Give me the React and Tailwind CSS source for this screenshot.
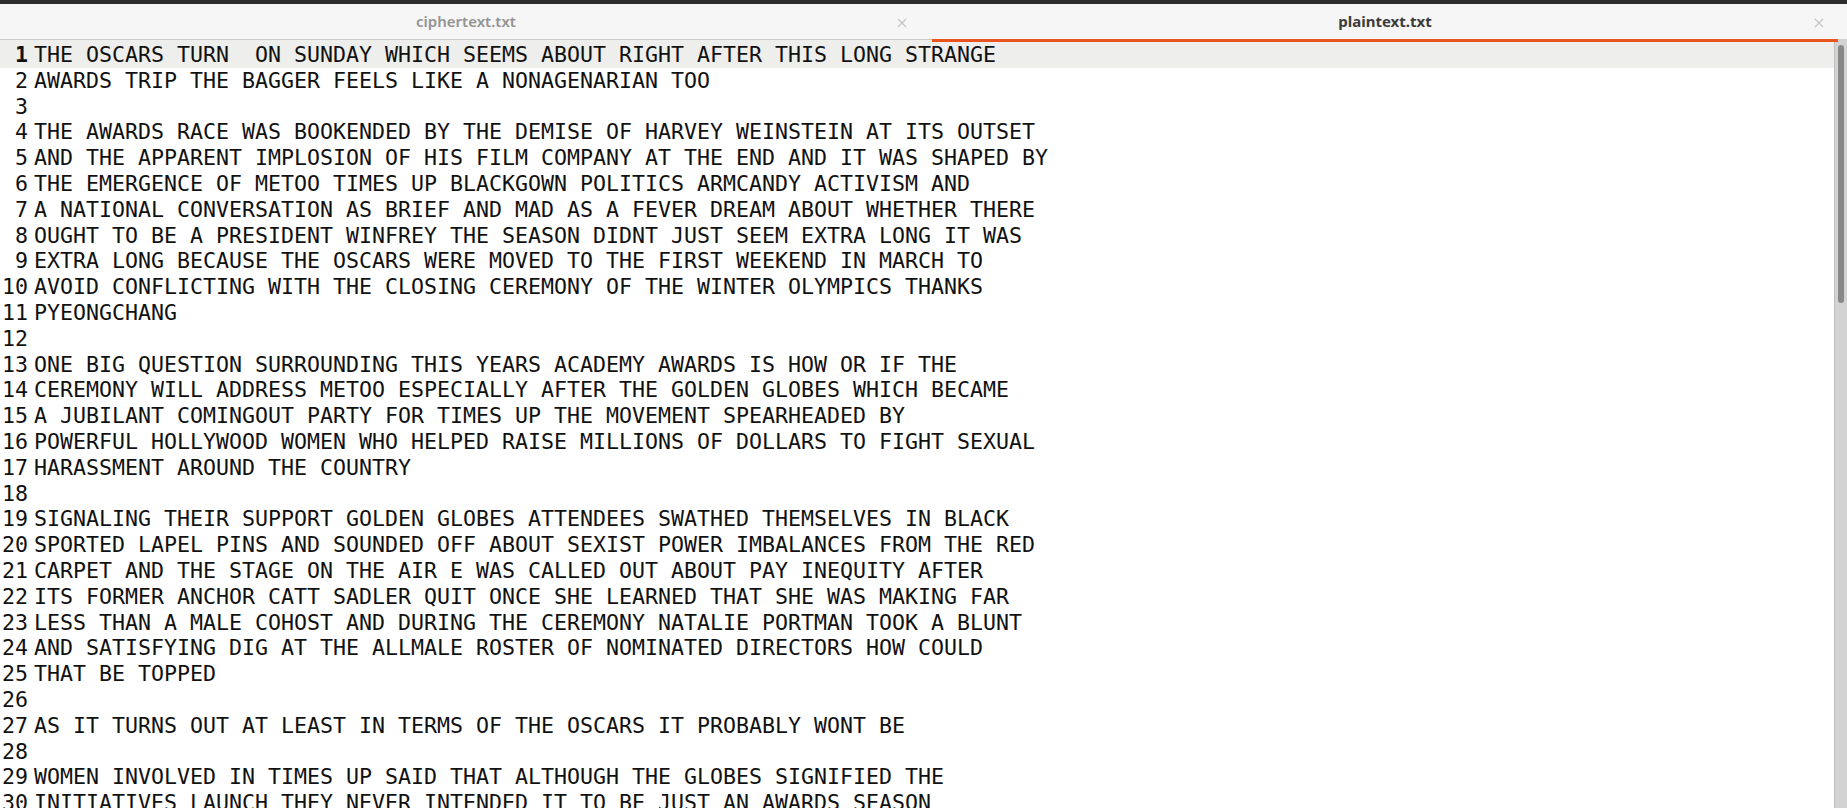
import React from "react";

const lines = [
  "THE OSCARS TURN  ON SUNDAY WHICH SEEMS ABOUT RIGHT AFTER THIS LONG STRANGE",
  "AWARDS TRIP THE BAGGER FEELS LIKE A NONAGENARIAN TOO",
  "",
  "THE AWARDS RACE WAS BOOKENDED BY THE DEMISE OF HARVEY WEINSTEIN AT ITS OUTSET",
  "AND THE APPARENT IMPLOSION OF HIS FILM COMPANY AT THE END AND IT WAS SHAPED BY",
  "THE EMERGENCE OF METOO TIMES UP BLACKGOWN POLITICS ARMCANDY ACTIVISM AND",
  "A NATIONAL CONVERSATION AS BRIEF AND MAD AS A FEVER DREAM ABOUT WHETHER THERE",
  "OUGHT TO BE A PRESIDENT WINFREY THE SEASON DIDNT JUST SEEM EXTRA LONG IT WAS",
  "EXTRA LONG BECAUSE THE OSCARS WERE MOVED TO THE FIRST WEEKEND IN MARCH TO",
  "AVOID CONFLICTING WITH THE CLOSING CEREMONY OF THE WINTER OLYMPICS THANKS",
  "PYEONGCHANG",
  "",
  "ONE BIG QUESTION SURROUNDING THIS YEARS ACADEMY AWARDS IS HOW OR IF THE",
  "CEREMONY WILL ADDRESS METOO ESPECIALLY AFTER THE GOLDEN GLOBES WHICH BECAME",
  "A JUBILANT COMINGOUT PARTY FOR TIMES UP THE MOVEMENT SPEARHEADED BY",
  "POWERFUL HOLLYWOOD WOMEN WHO HELPED RAISE MILLIONS OF DOLLARS TO FIGHT SEXUAL",
  "HARASSMENT AROUND THE COUNTRY",
  "",
  "SIGNALING THEIR SUPPORT GOLDEN GLOBES ATTENDEES SWATHED THEMSELVES IN BLACK",
  "SPORTED LAPEL PINS AND SOUNDED OFF ABOUT SEXIST POWER IMBALANCES FROM THE RED",
  "CARPET AND THE STAGE ON THE AIR E WAS CALLED OUT ABOUT PAY INEQUITY AFTER",
  "ITS FORMER ANCHOR CATT SADLER QUIT ONCE SHE LEARNED THAT SHE WAS MAKING FAR",
  "LESS THAN A MALE COHOST AND DURING THE CEREMONY NATALIE PORTMAN TOOK A BLUNT",
  "AND SATISFYING DIG AT THE ALLMALE ROSTER OF NOMINATED DIRECTORS HOW COULD",
  "THAT BE TOPPED",
  "",
  "AS IT TURNS OUT AT LEAST IN TERMS OF THE OSCARS IT PROBABLY WONT BE",
  "",
  "WOMEN INVOLVED IN TIMES UP SAID THAT ALTHOUGH THE GLOBES SIGNIFIED THE",
  "INITIATIVES LAUNCH THEY NEVER INTENDED IT TO BE JUST AN AWARDS SEASON",
];

function CloseX({ color }) {
  return (
    <svg width="10" height="10" viewBox="0 0 10 10" className="shrink-0">
      <path d="M1 1 L9 9 M9 1 L1 9" stroke={color} strokeWidth="1.2" fill="none" />
    </svg>
  );
}

export default function App() {
  return (
    <div className="w-full h-[808px] overflow-hidden flex flex-col bg-white">
      <div className="h-[4px] bg-[#2d2d2d] shrink-0" />
      <div
        className="h-[38px] shrink-0 flex bg-[#f6f6f6]"
        style={{ fontFamily: '"Noto Sans", "Open Sans", sans-serif' }}
      >
        <div className="w-[932px] flex flex-col">
          <div className="flex-1 relative flex items-center justify-center">
            <span className="text-[15px] font-semibold text-[#939393] leading-none">ciphertext.txt</span>
            <div className="absolute right-[25px] top-[14px]">
              <CloseX color="#c4c4c4" />
            </div>
          </div>
          <div className="h-px bg-[#c9c9c9]" />
          <div className="h-[2px] bg-[#eeeeec]" />
        </div>
        <div className="w-[906px] flex flex-col">
          <div className="flex-1 relative flex items-center justify-center">
            <span className="text-[15px] font-bold text-[#3c3c3c] leading-none">plaintext.txt</span>
            <div className="absolute right-[14px] top-[14px]">
              <CloseX color="#c4c4c4" />
            </div>
          </div>
          <div className="h-[3px] bg-[#e95420]" />
        </div>
        <div className="flex-1 flex flex-col">
          <div className="flex-1" />
          <div className="h-[3px] bg-[#d2d2d2]" />
        </div>
      </div>
      <div className="flex-1 flex min-h-0">
        <div
          className="flex-1 overflow-hidden text-[21.6px] text-[#111]"
          style={{ fontFamily: '"DejaVu Sans Mono", monospace' }}
        >
          {lines.map((l, i) => (
            <div
              key={i}
              className={`flex h-[25.8px] leading-[25.8px] ${i === 0 ? "bg-[#eeeeec]" : ""}`}
            >
              <div className={`w-[28px] shrink-0 text-right ${i === 0 ? "font-bold" : ""}`}>{i + 1}</div>
              <div className="pl-[6px] whitespace-pre">{l}</div>
            </div>
          ))}
        </div>
        <div className="w-[13px] shrink-0 bg-[#d3d3d3] border-l border-[#bdbdbd] pt-[3px] pl-[3px]">
          <div className="w-[6px] h-[258px] rounded-full bg-[#888888]" />
        </div>
      </div>
    </div>
  );
}
